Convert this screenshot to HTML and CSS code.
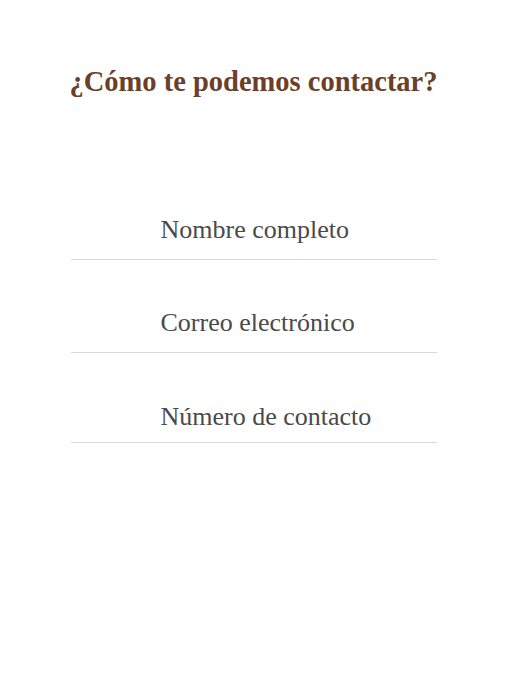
FILE: index.html
```html
<!DOCTYPE html>
<html lang="es">
<head>
<meta charset="utf-8">
<link rel="stylesheet" href="styles.css">
</head>
<body>
<main class="page">
  <h1 class="title">¿Cómo te podemos contactar?</h1>
  <form class="form">
    <div class="field field-1"><input class="input" type="text" placeholder="Nombre completo"></div>
    <div class="field field-2"><input class="input" type="email" placeholder="Correo electrónico"></div>
    <div class="field field-3"><input class="input" type="tel" placeholder="Número de contacto"></div>
  </form>
</main>
</body>
</html>
```
FILE: styles.css
```css
html, body {
  margin: 0;
  padding: 0;
  background: #ffffff;
}
.page {
  display: flex;
  flex-direction: column;
  align-items: center;
  font-family: "Liberation Serif", "DejaVu Serif", serif;
}
.title {
  margin: 64px 0 0 0;
  font-size: 28.5px;
  line-height: 36px;
  font-weight: 700;
  color: #6b3f29;
  text-align: center;
}
.form {
  width: 366px;
  margin-top: 100px;
  display: flex;
  flex-direction: column;
}
.field {
  border-bottom: 1px solid #d9d9d9;
  display: flex;
  align-items: flex-end;
}
.field-1 { height: 59px; }
.field-2 { height: 92px; }
.field-3 { height: 89px; }
.field-3 .input { padding-bottom: 10px; }
.input {
  width: 100%;
  border: 0;
  outline: none;
  background: transparent;
  padding: 0 0 14px 90px;
  font-family: "Liberation Serif", "DejaVu Serif", serif;
  font-size: 26px;
  line-height: 30px;
  color: #4a4a4a;
}
.input::placeholder {
  color: #4a4a4a;
  opacity: 1;
}
```
